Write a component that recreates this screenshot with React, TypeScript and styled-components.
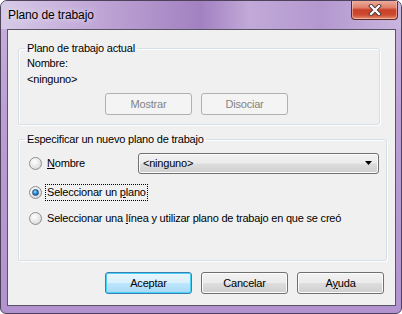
import React from 'react';
import styled, { createGlobalStyle, css } from 'styled-components';

const GlobalStyle = createGlobalStyle`
  html, body {
    margin: 0;
    padding: 0;
    background: #ffffff;
  }
  body {
    font-family: "Liberation Sans", Arial, sans-serif;
    font-size: 11px;
    letter-spacing: -0.2px;
    color: #000000;
  }
`;

const Window = styled.div`
  box-sizing: border-box;
  width: 402px;
  height: 314px;
  border: 1px solid #4d4259;
  border-radius: 7px 7px 6px 6px;
  background: linear-gradient(180deg, #c6b1dd 0%, #b99dd3 40%, #b293cf 100%);
  display: flex;
  flex-direction: column;
  overflow: hidden;
`;

const TitleBar = styled.div`
  height: 28px;
  display: flex;
  align-items: flex-start;
  justify-content: space-between;
  background: linear-gradient(
    90deg,
    #d7cae7 0%,
    #c6afdb 18%,
    #ab8cc7 42%,
    #a281c1 50%,
    #c1a9d8 62%,
    #b398cf 80%,
    #c9b6df 100%
  );
`;

const Title = styled.span`
  font-family: "Liberation Sans", Arial, sans-serif;
  font-size: 12px;
  letter-spacing: -0.1px;
  color: #000000;
  padding: 7px 0 0 7px;
  text-shadow: 0 0 6px rgba(255, 255, 255, 0.9);
`;

const CloseButton = styled.div`
  box-sizing: border-box;
  width: 47px;
  height: 20px;
  margin: -1px 3px 0 0;
  border: 1px solid #5e2a26;
  border-top: none;
  border-radius: 0 0 4px 4px;
  background: linear-gradient(
    180deg,
    #eeb2a2 0%,
    #e0806a 40%,
    #c9402a 52%,
    #cd4a30 78%,
    #e68d6e 100%
  );
  box-shadow: inset 0 0 0 1px rgba(255, 220, 210, 0.5);
  display: flex;
  align-items: center;
  justify-content: center;
`;

const Client = styled.div`
  box-sizing: border-box;
  margin: 0 5px 0 6px;
  height: 277px;
  border: 1px solid #585464;
  background: #f0f0f0;
  display: flex;
  flex-direction: column;
  padding: 0 10px 0 10px;
`;

const Group = styled.fieldset<{ $width: number; $top: number; $height: number }>`
  box-sizing: border-box;
  width: ${({ $width }) => $width}px;
  height: ${({ $height }) => $height}px;
  margin: ${({ $top }) => $top}px 0 0 0;
  padding: 0 0 0 8px;
  border: 1px solid #d5dfe5;
  border-radius: 3px;
  box-shadow: inset 1px 1px 0 #ffffff, 1px 1px 0 #ffffff;
  display: flex;
  flex-direction: column;
  min-width: 0;
`;

const Legend = styled.legend`
  padding: 0 2px;
  margin-left: -2px;
  line-height: 13px;
  font-size: 11px;
  color: #000000;
`;

const Label = styled.div<{ $top?: number }>`
  line-height: 13px;
  margin-top: ${({ $top }) => $top ?? 0}px;
`;

const ButtonRow = styled.div<{ $top: number; $left: number }>`
  display: flex;
  gap: 9px;
  margin-top: ${({ $top }) => $top}px;
  margin-left: ${({ $left }) => $left}px;
`;

const Button = styled.div<{ $disabled?: boolean; $default?: boolean }>`
  box-sizing: border-box;
  width: 87px;
  height: 22px;
  border: 1px solid #707070;
  border-radius: 3px;
  background: linear-gradient(180deg, #f2f2f2 0%, #ebebeb 48%, #dddddd 52%, #cfcfcf 100%);
  box-shadow: inset 0 0 0 1px #fcfcfc;
  display: flex;
  align-items: center;
  justify-content: center;
  color: #000000;
  ${({ $disabled }) =>
    $disabled &&
    css`
      border-color: #adb2b5;
      background: #f4f4f4;
      box-shadow: none;
      color: #838383;
    `}
  ${({ $default }) =>
    $default &&
    css`
      border-color: #3c7fb1;
      background: linear-gradient(180deg, #eaf6fd 0%, #d9f0fc 48%, #bee6fd 52%, #a7d9f5 100%);
      box-shadow: inset 0 0 0 1px #48d2f7;
    `}
`;

const RadioRow = styled.div<{ $top: number }>`
  display: flex;
  align-items: center;
  height: 20px;
  margin-top: ${({ $top }) => $top}px;
`;

const RadioCircle = styled.span<{ $checked?: boolean }>`
  box-sizing: border-box;
  width: 13px;
  height: 13px;
  margin-left: 2px;
  border-radius: 50%;
  border: 1px solid #8f8f8f;
  background: radial-gradient(circle at 40% 35%, #ffffff 0%, #e6e6e6 55%, #c8c8c8 100%);
  display: flex;
  align-items: center;
  justify-content: center;
  flex-shrink: 0;
  ${({ $checked }) =>
    $checked &&
    css`
      &::after {
        content: '';
        width: 7px;
        height: 7px;
        border-radius: 50%;
        background: radial-gradient(circle at 40% 35%, #9be0ff 0%, #2a8fd6 45%, #0d4d95 100%);
        border: 1px solid #1c4f86;
        box-sizing: border-box;
      }
    `}
`;

const RadioLabel = styled.span<{ $focused?: boolean }>`
  margin-left: 3px;
  padding: 1px 1px;
  line-height: 13px;
  border: 1px dotted transparent;
  ${({ $focused }) =>
    $focused &&
    css`
      border-color: #000000;
    `}
`;

const Combo = styled.div`
  box-sizing: border-box;
  width: 241px;
  height: 21px;
  margin-left: 51px;
  border: 1px solid #707070;
  border-radius: 3px;
  background: linear-gradient(180deg, #f2f2f2 0%, #ebebeb 48%, #dddddd 52%, #cfcfcf 100%);
  box-shadow: inset 0 0 0 1px #fcfcfc;
  display: flex;
  align-items: center;
  justify-content: space-between;
  padding: 0 6px 0 4px;
`;

const Footer = styled.div`
  display: flex;
  justify-content: flex-end;
  gap: 9px;
  margin-top: 11px;
  margin-right: 1px;
`;

const U = styled.span`
  text-decoration: underline;
`;

export default function App() {
  return (
    <>
      <GlobalStyle />
      <Window>
        <TitleBar>
          <Title>Plano de trabajo</Title>
          <CloseButton>
            <svg width="14" height="12" viewBox="0 0 14 12">
              <path d="M3 2 L11 10 M11 2 L3 10" stroke="#4a3a3a" strokeWidth="4" strokeLinecap="square" />
              <path d="M3 2 L11 10 M11 2 L3 10" stroke="#ffffff" strokeWidth="2.2" strokeLinecap="square" />
            </svg>
          </CloseButton>
        </TitleBar>
        <Client>
          <Group $width={362} $top={12} $height={83}>
            <Legend>Plano de trabajo actual</Legend>
            <Label $top={2}>Nombre:</Label>
            <Label $top={3}>&lt;ninguno&gt;</Label>
            <ButtonRow $top={7} $left={78}>
              <Button $disabled>Mostrar</Button>
              <Button $disabled>Disociar</Button>
            </ButtonRow>
          </Group>
          <Group $width={369} $top={8} $height={128}>
            <Legend>Especificar un nuevo plano de trabajo</Legend>
            <RadioRow $top={7}>
              <RadioCircle />
              <RadioLabel>
                <U>N</U>ombre
              </RadioLabel>
              <Combo>
                <span>&lt;ninguno&gt;</span>
                <svg width="7" height="4" viewBox="0 0 7 4">
                  <path d="M0 0 H7 L3.5 4 Z" fill="#000000" />
                </svg>
              </Combo>
            </RadioRow>
            <RadioRow $top={9}>
              <RadioCircle $checked />
              <RadioLabel $focused>
                Seleccionar un <U>p</U>lano
              </RadioLabel>
            </RadioRow>
            <RadioRow $top={6}>
              <RadioCircle />
              <RadioLabel>
                Seleccionar una <U>l</U>ínea y utilizar plano de trabajo en que se creó
              </RadioLabel>
            </RadioRow>
          </Group>
          <Footer>
            <Button $default>Aceptar</Button>
            <Button>Cancelar</Button>
            <Button>
              A<U>y</U>uda
            </Button>
          </Footer>
        </Client>
      </Window>
    </>
  );
}
